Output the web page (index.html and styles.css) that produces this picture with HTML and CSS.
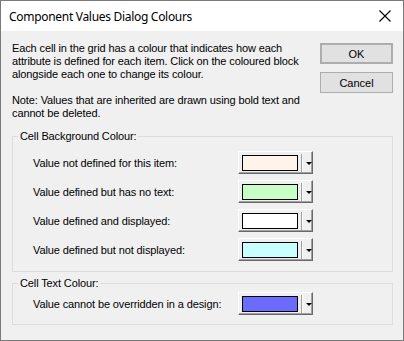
FILE: index.html
```html
<!DOCTYPE html>
<html>
<head>
<meta charset="utf-8">
<link rel="stylesheet" href="styles.css">
</head>
<body>
<div class="window">
  <div class="titlebar">
    <span class="title">Component Values Dialog Colours</span>
    <svg class="close" width="12" height="12" viewBox="0 0 12 12"><path d="M0.5 0.5 L11.5 11.5 M11.5 0.5 L0.5 11.5" stroke="#000" stroke-width="1.1" fill="none"/></svg>
  </div>
  <div class="client">
    <div class="top">
      <div class="intro">
        <p>Each cell in the grid has a colour that indicates how each<br>attribute is defined for each item. Click on the coloured block<br>alongside each one to change its colour.</p>
        <p class="note">Note: Values that are inherited are drawn using bold text and<br>cannot be deleted.</p>
      </div>
      <div class="actions">
        <button class="btn default">OK</button>
        <button class="btn">Cancel</button>
      </div>
    </div>
    <fieldset class="group bg-group">
      <legend>Cell Background Colour:</legend>
      <div class="rows">
        <div class="row"><span class="label">Value not defined for this item:</span><div class="picker"><span class="swatch c-peach"></span><span class="sep"></span><span class="arrow"></span></div></div>
        <div class="row"><span class="label">Value defined but has no text:</span><div class="picker"><span class="swatch c-green"></span><span class="sep"></span><span class="arrow"></span></div></div>
        <div class="row"><span class="label">Value defined and displayed:</span><div class="picker"><span class="swatch c-white"></span><span class="sep"></span><span class="arrow"></span></div></div>
        <div class="row"><span class="label">Value defined but not displayed:</span><div class="picker"><span class="swatch c-cyan"></span><span class="sep"></span><span class="arrow"></span></div></div>
      </div>
    </fieldset>
    <fieldset class="group text-group">
      <legend>Cell Text Colour:</legend>
      <div class="rows">
        <div class="row"><span class="label">Value cannot be overridden in a design:</span><div class="picker"><span class="swatch c-blue"></span><span class="sep"></span><span class="arrow"></span></div></div>
      </div>
    </fieldset>
  </div>
</div>
</body>
</html>
```

FILE: styles.css
```css
html, body {
  margin: 0;
  padding: 0;
  background: #f0f0f0;
}
.window {
  width: 404px;
  height: 341px;
  box-sizing: border-box;
  border: 1px solid #7a7a7a;
  background: #f0f0f0;
  display: flex;
  flex-direction: column;
  font-family: "Liberation Sans", Arial, sans-serif;
  font-size: 11px;
  letter-spacing: -0.12px;
  color: #000;
}
.titlebar {
  height: 30px;
  background: #fff;
  display: flex;
  align-items: center;
  justify-content: space-between;
  padding: 0 9px 0 8px;
}
.title {
  font-family: "Noto Sans", "Open Sans", sans-serif;
  font-size: 12px;
  letter-spacing: -0.3px;
  color: #000;
}
.close {
  display: block;
  margin-right: 3px;
}
.client {
  padding: 11px 10px 0 11px;
}
.top {
  display: flex;
  justify-content: space-between;
  align-items: flex-start;
}
.intro p {
  margin: 0;
  line-height: 13px;
  white-space: nowrap;
}
.intro .note {
  margin-top: 13px;
}
.actions {
  display: flex;
  flex-direction: column;
  gap: 8px;
  margin-top: 1px;
}
.btn {
  width: 73px;
  height: 21px;
  box-sizing: border-box;
  background: #e1e1e1;
  border: 1px solid #adadad;
  font-family: "Liberation Sans", Arial, sans-serif;
  font-size: 11px;
  color: #000;
  padding: 0;
}
.btn.default {
  border: 2px solid #adadad;
}
.group {
  margin: 10px 0 0 0;
  padding: 8px 0 10px 0;
  border: 1px solid #dcdcdc;
  min-inline-size: 0;
}
.group legend {
  margin-left: 5px;
  padding: 0 2px;
  line-height: 13px;
}
.text-group {
  margin-top: 5px;
  padding-top: 2px;
  padding-bottom: 9px;
}
.rows {
  display: flex;
  flex-direction: column;
  gap: 6px;
  padding-left: 20px;
}
.row {
  display: flex;
  align-items: center;
}
.label {
  width: 205px;
  white-space: nowrap;
}
.picker {
  width: 75px;
  height: 23px;
  box-sizing: border-box;
  border-top: 1px solid #ffffff;
  border-left: 1px solid #ffffff;
  border-right: 1px solid #696969;
  border-bottom: 1px solid #696969;
  box-shadow: inset -1px -1px 0 #a0a0a0;
  background: #f0f0f0;
  display: flex;
  align-items: center;
  padding-left: 3px;
}
.swatch {
  width: 56px;
  height: 16px;
  box-sizing: border-box;
  border: 1px solid #000;
}
.c-peach { background: #fff3ea; }
.c-green { background: #c8ffc8; }
.c-white { background: #ffffff; }
.c-cyan { background: #c8ffff; }
.c-blue { background: #6b6bff; }
.sep {
  width: 1px;
  height: 18px;
  background: #a0a0a0;
  border-right: 1px solid #ffffff;
  margin-left: 3px;
}
.arrow {
  width: 0;
  height: 0;
  border-left: 3px solid transparent;
  border-right: 3px solid transparent;
  border-top: 3px solid #000;
  margin-left: 3px;
  margin-top: 1px;
}
```
